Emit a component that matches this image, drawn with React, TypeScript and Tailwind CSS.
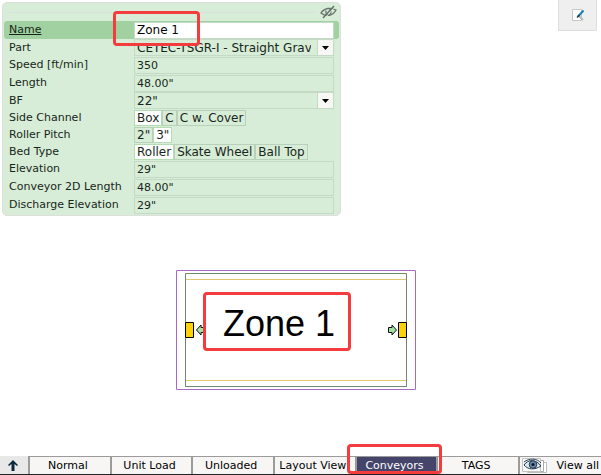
import { useState } from "react";
import type { ReactNode } from "react";
import clsx from "clsx";

const FIELD = "w-full h-full min-w-0 border border-[#c5dac6] px-[2px] outline-none rounded-none";

function Row({ id, label, children }: { id: string; label: string; children: ReactNode }) {
  return (
    <div className="flex h-[18px] items-center px-[6px]">
      <label htmlFor={id} className="w-[125px] shrink-0 whitespace-nowrap">
        {label}
      </label>
      <div className="h-[17px] min-w-0 flex-1">{children}</div>
    </div>
  );
}

function TextRow({ id, label, value }: { id: string; label: string; value: string }) {
  return (
    <Row id={id} label={label}>
      <input id={id} defaultValue={value} className={clsx(FIELD, "bg-transparent")} />
    </Row>
  );
}

function SelectRow({ id, label, value }: { id: string; label: string; value: string }) {
  return (
    <div className="flex h-[17px] items-center px-[6px]">
      <label htmlFor={id} className="w-[125px] shrink-0">
        {label}
      </label>
      <div className="relative h-[17px] min-w-0 flex-1">
        <select id={id} defaultValue={value} className={clsx(FIELD, "appearance-none bg-transparent pr-[22px] text-[12px]")}>
          <option value={value}>{value}</option>
        </select>
        <span className="pointer-events-none absolute inset-y-0 right-0 flex w-[17px] items-center justify-center border border-[#c5dac6] bg-[#f7f8f5]">
          <svg width="7" height="4" viewBox="0 0 7 4" aria-hidden="true">
            <path d="M0 0h7L3.5 4z" fill="#000" />
          </svg>
        </span>
      </div>
    </div>
  );
}

function ChoiceRow({ name, label, options, initial }: { name: string; label: string; options: string[]; initial: string }) {
  const [selected, setSelected] = useState(initial);
  return (
    <div role="radiogroup" aria-label={label} className="flex h-[17px] items-center px-[6px]">
      <span className="w-[125px] shrink-0">{label}</span>
      <div className="flex h-4 text-[12px]">
        {options.map((option) => (
          <label
            key={option}
            className={clsx(
              "relative flex items-center whitespace-nowrap border px-[2px]",
              selected === option ? "border-[#b3dcb2] bg-white" : "border-[#b9d0ba]"
            )}
          >
            <input
              type="radio"
              name={name}
              checked={selected === option}
              onChange={() => setSelected(option)}
              className="sr-only"
            />
            {option}
          </label>
        ))}
      </div>
    </div>
  );
}

function HiddenIcon() {
  return (
    <svg width="17" height="14" viewBox="0 0 17 14" fill="none" stroke="#66736a" aria-hidden="true">
      <path d="M1 8C4 3 11 2 16 5C13 11 6 12 1 8Z" strokeWidth="1.3" />
      <path d="M6 5.500C5 9 8 10 10 9C12 7 11 5 9.500 4" strokeWidth="1.3" />
      <path d="M3 13L14 1" strokeWidth="1.5" />
      <path d="M5 13L15.500 1.500" stroke="#d7edd7" />
    </svg>
  );
}

function PropertyPanel() {
  return (
    <section className="w-[339px] rounded-[5px] border border-[#dcdfdc] bg-[#d7edd7] pb-px text-[11px] leading-4 text-[#17261a]">
      <div className="flex h-[18px] items-center gap-1 pl-[6px] pr-[3px]">
        <div className="h-px flex-1 bg-[#dcdfe0]" />
        <button aria-label="Hide properties">
          <HiddenIcon />
        </button>
      </div>
      <div className="relative mx-px flex h-[18px] items-center rounded-[3px] bg-[#a1d1a0] px-[5px]">
        <label htmlFor="name" className="w-[125px] shrink-0 underline">
          Name
        </label>
        <input id="name" defaultValue="Zone 1" className="h-[17px] min-w-0 flex-1 border border-[#c5dac6] bg-white px-[2px] text-[12px] text-black outline-none" />
        <div className="pointer-events-none absolute -top-[10px] left-[109px] z-10 h-[35px] w-[87px] rounded-[4px] border-[3px] border-[#f43b3d]" />
      </div>
      <SelectRow id="part" label="Part" value="CETEC-TSGR-I - Straight Gravity" />
      <TextRow id="speed" label="Speed [ft/min]" value="350" />
      <TextRow id="length" label="Length" value={'48.00"'} />
      <SelectRow id="bf" label="BF" value={'22"'} />
      <ChoiceRow name="side" label="Side Channel" options={["Box", "C", "C w. Cover"]} initial="Box" />
      <ChoiceRow name="pitch" label="Roller Pitch" options={['2"', '3"']} initial={'3"'} />
      <ChoiceRow name="bed" label="Bed Type" options={["Roller", "Skate Wheel", "Ball Top"]} initial="Roller" />
      <TextRow id="elevation" label="Elevation" value={'29"'} />
      <TextRow id="length2d" label="Conveyor 2D Length" value={'48.00"'} />
      <TextRow id="discharge" label="Discharge Elevation" value={'29"'} />
    </section>
  );
}

function EditIcon() {
  return (
    <svg width="14" height="14" viewBox="0 0 14 14" aria-hidden="true">
      <path d="M1.500 1.500h9v11h-9z" fill="#fff" stroke="#c6c6c6" />
      <path d="M8 8l4 4" stroke="#b9b9b9" strokeWidth="2" />
      <path d="M7 8.500L12.500 2.500" stroke="#1b7db5" strokeWidth="2" />
      <path d="M6 9.500L8.500 7" stroke="#23373f" strokeWidth="1.5" />
    </svg>
  );
}

function ConveyorDrawing() {
  return (
    <div className="relative h-[120px] w-60">
      <svg width="240" height="120" viewBox="0 0 240 120" fill="none" aria-hidden="true">
        <path d="M.5 .5h239v119H.5z" stroke="#a66cc4" />
        <path d="M9.500 3.500h221v113H9.500z" stroke="#6f8a70" />
        <path d="M10 9.500h220M10 110.500h220" stroke="#e0c86c" />
        <path d="M9.500 52.500h8v15h-8zM222.500 52.500h8v15h-8z" fill="#fbd20a" stroke="#000" />
        <g fill="#a5e0a3" stroke="#111">
          <path d="M20.500 60l4.500-5v2.500h3.500v5H25V65z" />
          <path d="M220.500 60l-4.500-5v2.500h-3.500v5h3.500V65z" />
        </g>
      </svg>
      <div className="absolute left-[27px] top-[22px] flex h-[59px] w-[148px] items-center justify-center rounded-[4px] border-[3px] border-[#f43b3d] bg-white pl-1 pt-1 font-['Liberation_Sans',Arial,sans-serif] text-[36px] leading-none text-black">
        Zone 1
      </div>
    </div>
  );
}

function ViewIcon() {
  return (
    <svg width="27" height="16" viewBox="0 0 27 16" aria-hidden="true">
      <path d="M6.500 4.500h19v10h-19z" fill="#fff" stroke="#bdbdbd" />
      <path d="M4.500 2.500h18v11h-18z" fill="#fff" stroke="#a9a9a9" />
      <path d="M1.500 .5h18v13h-18z" fill="#f8f8f8" stroke="#c4c4c4" />
      <path d="M3 7C7 1 15 1 20 8C14 12 7 12 3 7Z" fill="#dfe7ee" stroke="#26384b" />
      <circle cx="12" cy="6.500" r="3.800" fill="#6688a6" stroke="#263b52" />
      <circle cx="12" cy="6.500" r="1.600" fill="#0b1928" />
      <path d="M3 4C8 0 16 0 20 5" fill="none" stroke="#33465a" />
    </svg>
  );
}

const TABS = ["Normal", "Unit Load", "Unloaded", "Layout View", "Conveyors", "TAGS"];

function TabBar() {
  const [active, setActive] = useState("Conveyors");
  return (
    <nav className="flex h-[19px] items-stretch border-b border-[#222] bg-[#e8e8e8] text-[11px] leading-4 text-black">
      <button aria-label="Up" className="flex w-7 shrink-0 items-center justify-center pr-[2px]">
        <svg width="10" height="11" viewBox="0 0 10 11" aria-hidden="true">
          <path d="M5 0l5 5-1 1-2.500-2V11h-3V4L1 6 0 5z" fill="#0b2a3d" />
        </svg>
      </button>
      {TABS.map((tab) => (
        <div key={tab} className="relative flex min-w-0 flex-1 basis-0">
          <button
            onClick={() => setActive(tab)}
            className={clsx(
              "w-full whitespace-nowrap border-l-2 border-t border-[#9b9b9b] pr-1",
              active === tab ? "bg-[#45446b] text-white" : "bg-[#f7f6f5]"
            )}
          >
            {tab}
          </button>
          {tab === "Conveyors" && (
            <div className="pointer-events-none absolute -left-[8px] -right-[6px] -top-[12px] z-10 h-[30px] rounded-[4px] border-[3px] border-[#f43b3d]" />
          )}
        </div>
      ))}
      <div className="flex w-[83px] shrink-0">
        <button className="flex w-full items-center justify-between whitespace-nowrap border-l-2 border-t border-[#9b9b9b] bg-[#f7f6f5] pl-px pr-[2px]">
          <ViewIcon />
          View all
        </button>
      </div>
    </nav>
  );
}

export default function App() {
  return (
    <div className="flex min-h-screen flex-col bg-white font-['DejaVu_Sans',Verdana,sans-serif]">
      <header className="flex items-start justify-between pl-[2px] pr-1">
        <div className="pt-[2px]">
          <PropertyPanel />
        </div>
        <button aria-label="Edit" className="flex h-[31px] w-[39px] items-center justify-center border border-t-0 border-[#dedede] bg-[#efefef]">
          <EditIcon />
        </button>
      </header>
      <main className="flex flex-1 items-center justify-center pb-3 pr-[9px]">
        <ConveyorDrawing />
      </main>
      <TabBar />
    </div>
  );
}
